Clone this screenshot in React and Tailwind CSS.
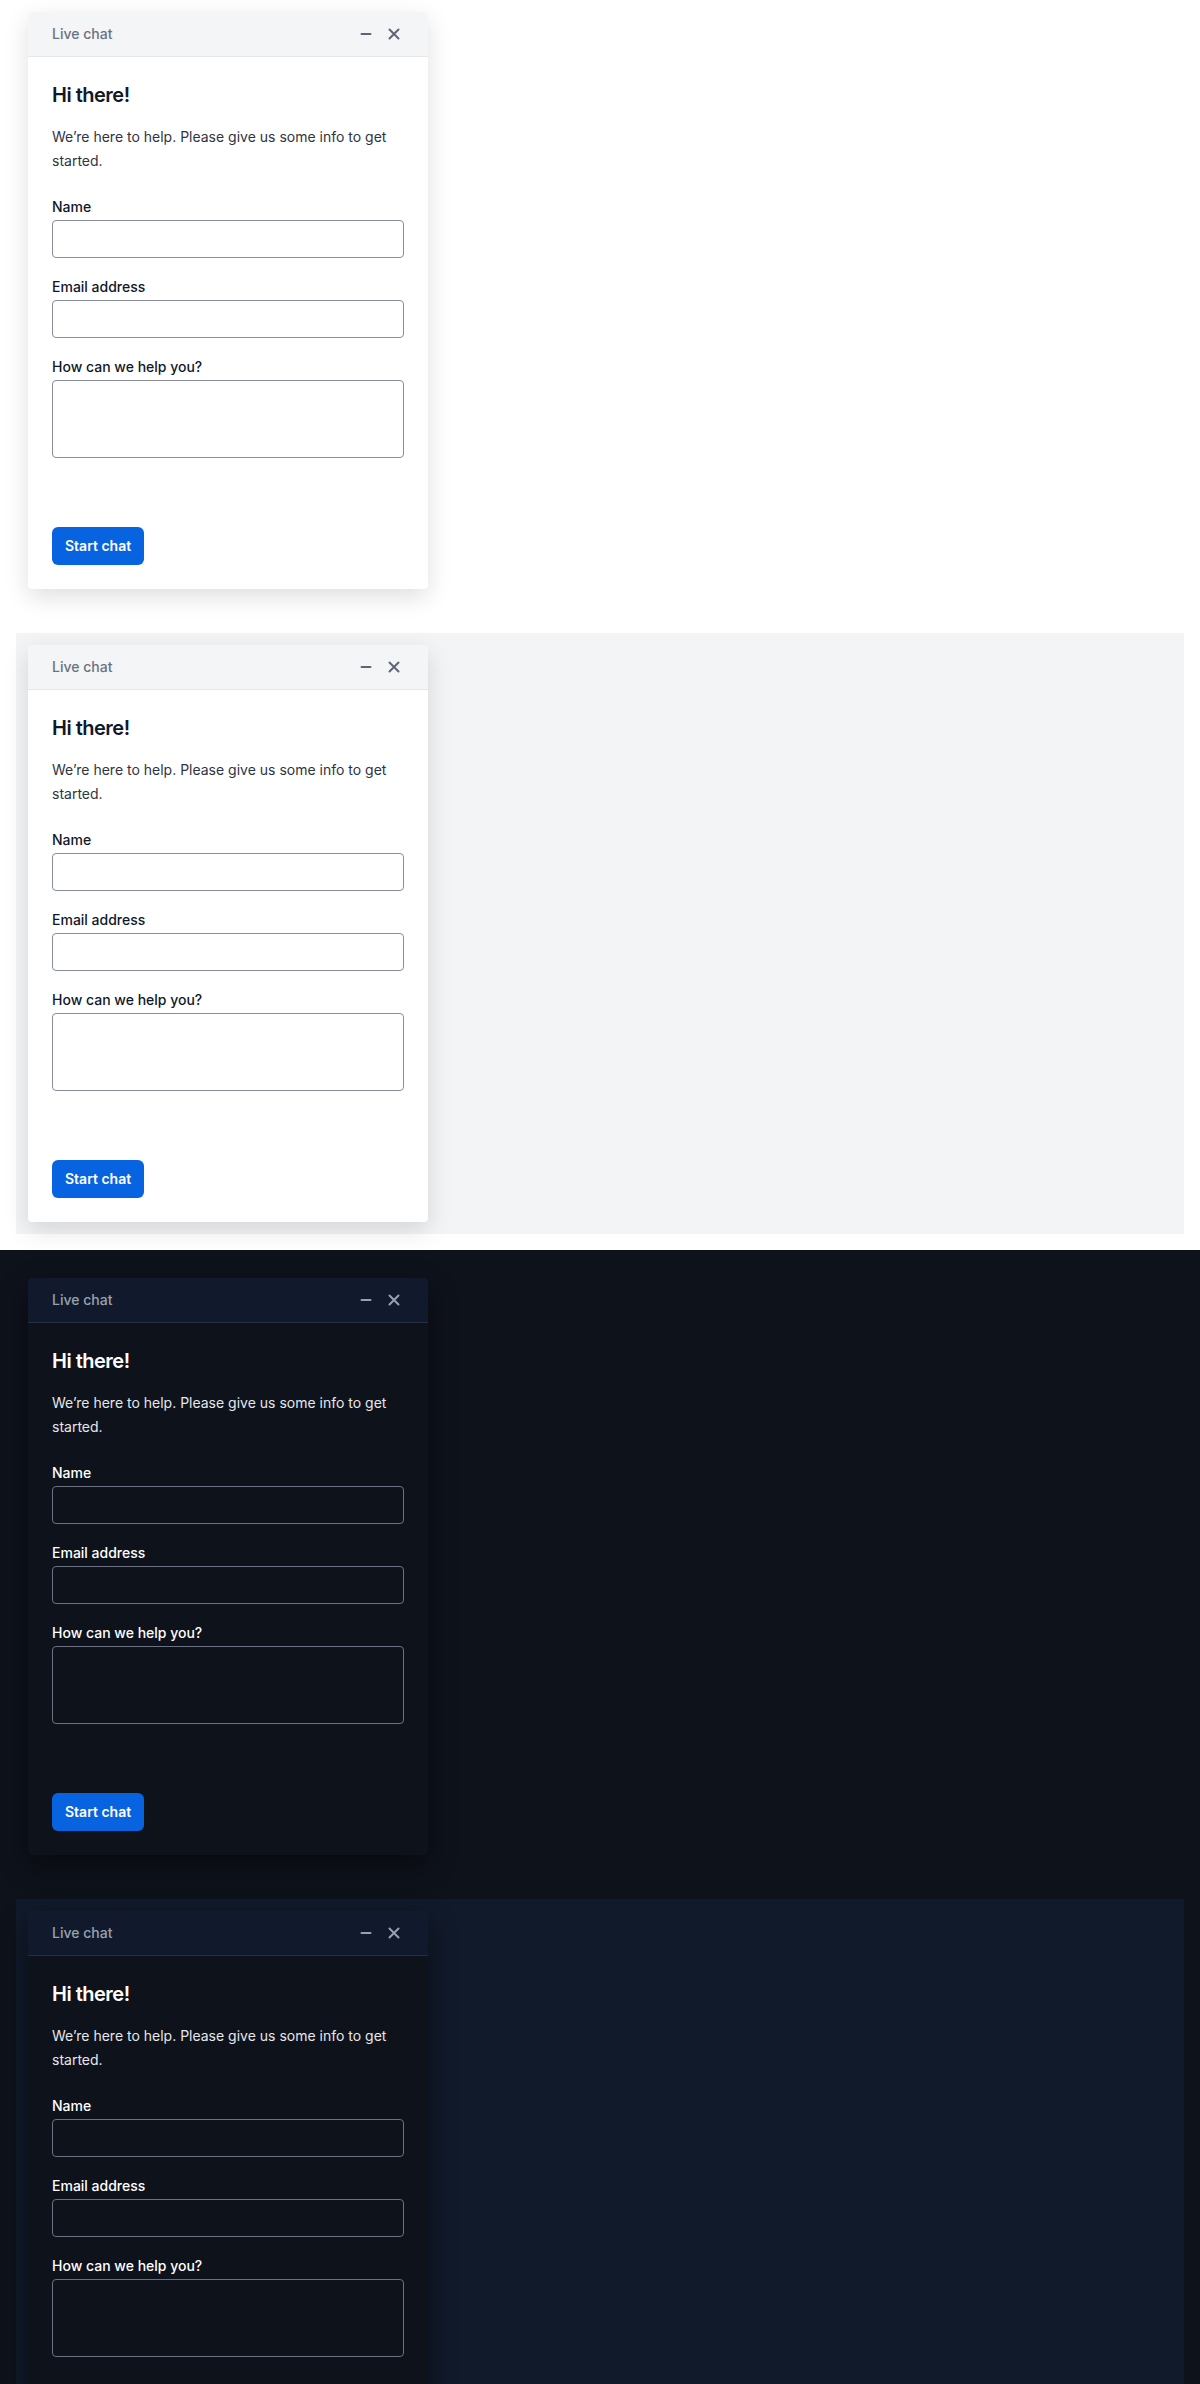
import React from 'react';

// Live chat intake widget, shown in four themes
function ChatCard({ dark = false }) {
    const labelCls = `block text-sm leading-5 font-medium ${dark ? 'text-white' : 'text-gray-900'}`;
    const fieldCls = `block w-full rounded border bg-transparent px-3 py-2 text-sm leading-5 outline-none ${dark ? 'border-[#6b7183] text-white' : 'border-[#878c9e] text-gray-900'}`;

    return (
        <div
            className={`flex h-[577px] w-[400px] flex-col overflow-hidden rounded-sm ${dark
                ? 'bg-[#0e121b] shadow-[0_10px_28px_rgba(0,0,0,0.45)]'
                : 'bg-white shadow-[0_8px_24px_rgba(0,0,0,0.13)]'
                }`}
        >
            {/* Header */}
            <div
                className={`flex h-[45px] shrink-0 items-center justify-between border-b px-6 ${dark ? 'border-[#263043] bg-[#111a2c]' : 'border-gray-200 bg-[#f4f5f7]'
                    }`}
            >
                <span className={`text-sm font-medium ${dark ? 'text-gray-400' : 'text-gray-500'}`}>Live chat</span>
                <div className={`flex items-center gap-2 ${dark ? 'text-gray-400' : 'text-[#5f6577]'}`}>
                    <button type="button" className="p-1" aria-label="Minimize">
                        <svg width="12" height="12" viewBox="0 0 12 12" fill="none" stroke="currentColor" strokeWidth="2" strokeLinecap="round">
                            <path d="M1.5 6h9" />
                        </svg>
                    </button>
                    <button type="button" className="p-1" aria-label="Close">
                        <svg width="12" height="12" viewBox="0 0 12 12" fill="none" stroke="currentColor" strokeWidth="2" strokeLinecap="round">
                            <path d="M1.5 1.5l9 9M10.5 1.5l-9 9" />
                        </svg>
                    </button>
                </div>
            </div>

            {/* Body */}
            <div className="flex flex-1 flex-col p-6">
                <h2 className={`text-xl leading-7 font-semibold tracking-tight ${dark ? 'text-white' : 'text-gray-900'}`}>Hi there!</h2>
                <p className={`mt-4 text-sm leading-6 ${dark ? 'text-gray-200' : 'text-[#2f3441]'}`}>
                    We’re here to help. Please give us some info to get started.
                </p>

                <div className="mt-6">
                    <label className={labelCls}>Name</label>
                    <input type="text" className={`mt-[3px] h-[38px] ${fieldCls}`} />
                </div>
                <div className="mt-[19px]">
                    <label className={labelCls}>Email address</label>
                    <input type="email" className={`mt-[3px] h-[38px] ${fieldCls}`} />
                </div>
                <div className="mt-[19px]">
                    <label className={labelCls}>How can we help you?</label>
                    <textarea rows={3} className={`mt-[3px] h-[78px] resize-none ${fieldCls}`} />
                </div>

                <div className="mt-auto">
                    <button
                        type="button"
                        className="rounded-md border border-transparent bg-[#0763e0] px-3 py-2 text-sm leading-5 font-semibold text-white"
                    >
                        Start chat
                    </button>
                </div>
            </div>
        </div>
    );
}

export default function App() {
    return (
        <div className="font-['Inter',sans-serif]">
            {/* Light */}
            <div className="bg-white px-4 pb-4">
                <div className="bg-white p-3">
                    <ChatCard />
                </div>
                <div className="mt-8 bg-gray-100 p-3">
                    <ChatCard />
                </div>
            </div>

            {/* Dark */}
            <div className="bg-[#0e121b] p-4">
                <div className="bg-[#0e121b] p-3">
                    <ChatCard dark />
                </div>
                <div className="mt-8 bg-[#111a2b] p-3">
                    <ChatCard dark />
                </div>
            </div>
        </div>
    );
}
